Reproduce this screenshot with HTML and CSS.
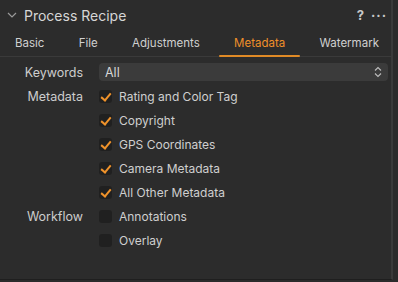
FILE: index.html
```html
<!DOCTYPE html>
<html lang="en">
<head>
  <meta charset="UTF-8" />
  <title>Process Recipe</title>
  <link rel="stylesheet" href="styles.css">
</head>
<body>
  <div class="panel">
    <!-- Header -->
    <div class="header">
      <svg class="chevron" width="10" height="6" viewBox="0 0 10 6"><path d="M1 1 L5 5 L9 1" fill="none" stroke="#9a9a9a" stroke-width="1.2"/></svg>
      <span class="title">Process Recipe</span>
      <span class="tools"><span class="help">?</span><span class="more">&middot;&middot;&middot;</span></span>
    </div>

    <!-- Tabs -->
    <div class="tabs">
      <span class="tab">Basic</span>
      <span class="tab">File</span>
      <span class="tab">Adjustments</span>
      <span class="tab active">Metadata</span>
      <span class="tab">Watermark</span>
    </div>

    <!-- Form -->
    <div class="form">
      <div class="row">
        <span class="label">Keywords</span>
        <div class="select">
          <span>All</span>
          <svg width="8" height="12" viewBox="0 0 8 12"><path d="M1 4.5 L4 1.5 L7 4.5 M1 7.5 L4 10.5 L7 7.5" fill="none" stroke="#bdbdbd" stroke-width="1.1"/></svg>
        </div>
      </div>
      <div class="row">
        <span class="label">Metadata</span>
        <label class="check on"><span class="box"></span>Rating and Color Tag</label>
      </div>
      <div class="row">
        <span class="label"></span>
        <label class="check on"><span class="box"></span>Copyright</label>
      </div>
      <div class="row">
        <span class="label"></span>
        <label class="check on"><span class="box"></span>GPS Coordinates</label>
      </div>
      <div class="row">
        <span class="label"></span>
        <label class="check on"><span class="box"></span>Camera Metadata</label>
      </div>
      <div class="row">
        <span class="label"></span>
        <label class="check on"><span class="box"></span>All Other Metadata</label>
      </div>
      <div class="row">
        <span class="label">Workflow</span>
        <label class="check"><span class="box"></span>Annotations</label>
      </div>
      <div class="row">
        <span class="label"></span>
        <label class="check"><span class="box"></span>Overlay</label>
      </div>
    </div>
  </div>
</body>
</html>
```
FILE: styles.css
```css
body {
  margin: 0;
  background: #2b2b2b;
  font-family: Inter, 'Noto Sans', Arial, sans-serif;
  color: #cfcfcf;
}
.panel {
  width: 393px;
  height: 280px;
  border-right: 2px solid #3a3a3a;
  border-bottom: 1px solid #1f1f1f;
  background: #2c2c2c;
  box-sizing: border-box;
}
.header {
  display: flex;
  align-items: center;
  height: 30px;
  padding: 0 4px 0 7px;
}
.chevron {
  margin-right: 7px;
}
.title {
  font-size: 14px;
  color: #d6d6d6;
  flex: 1;
}
.tools {
  display: flex;
  align-items: center;
  gap: 7px;
  color: #c8c8c8;
  font-weight: 700;
  font-size: 13px;
}
.more {
  letter-spacing: 1px;
}
.tabs {
  display: flex;
  height: 26px;
  align-items: center;
  justify-content: space-between;
  padding: 0 12px 0 15px;
  border-bottom: 1px solid #3a3a3a;
}
.tab {
  font-size: 11.5px;
  color: #d0d0d0;
  position: relative;
  height: 26px;
  line-height: 26px;
}
.tab.active {
  color: #ef8f2a;
}
.tab.active::after {
  content: "";
  position: absolute;
  left: -15px;
  right: -15px;
  bottom: -1px;
  height: 2px;
  background: #e08a26;
  border-radius: 1px;
}
.form {
  padding-top: 3px;
}
.row {
  display: flex;
  align-items: center;
  height: 24px;
}
.label {
  width: 83px;
  text-align: right;
  font-size: 12.5px;
  color: #cdcdcd;
  margin-right: 16px;
}
.select {
  flex: 1;
  margin-right: 3px;
  height: 18px;
  background: #3b3b3b;
  border-radius: 4px;
  display: flex;
  align-items: center;
  justify-content: space-between;
  padding: 0 6px;
  font-size: 12.5px;
  color: #d6d6d6;
}
.check {
  display: flex;
  align-items: center;
  font-size: 12px;
  color: #cfcfcf;
}
.box {
  width: 13px;
  height: 13px;
  border-radius: 3px;
  background: #202020;
  margin-right: 7px;
  position: relative;
}
.check.on .box::after {
  content: "";
  position: absolute;
  left: 4px;
  top: 1px;
  width: 4px;
  height: 8px;
  border-right: 2px solid #f0932b;
  border-bottom: 2px solid #f0932b;
  transform: rotate(40deg);
}
```
